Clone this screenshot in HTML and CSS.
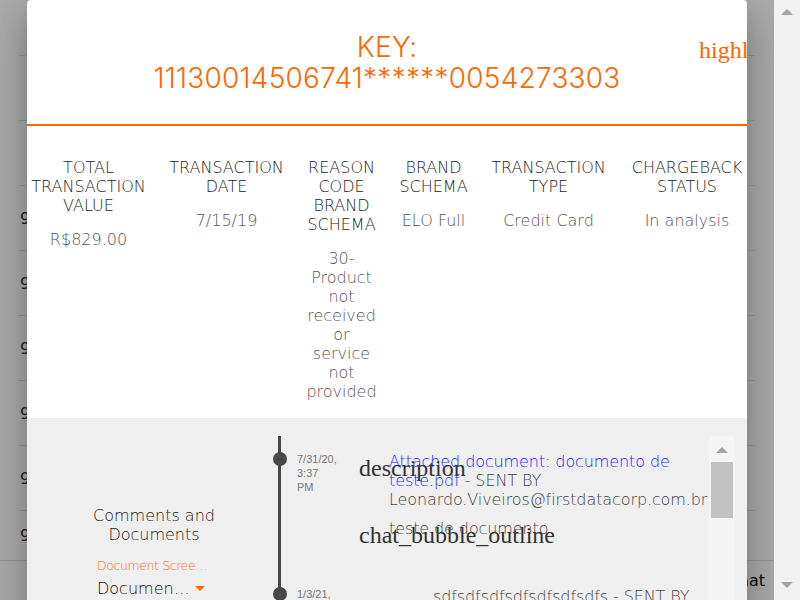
FILE: index.html
```html
<!DOCTYPE html>
<html lang="en">
<head>
<meta charset="utf-8">
<title>Chargeback details</title>
<link rel="stylesheet" href="styles.css">
</head>
<body>
<div class="viewport">
  <div class="page">
    <div class="table">
      <div class="row head"></div>
      <div class="row"></div>
      <div class="row"></div>
      <div class="row"><span class="cell">9112233</span></div>
      <div class="row"><span class="cell">9112234</span></div>
      <div class="row"><span class="cell">9112235</span></div>
      <div class="row"><span class="cell">9112236</span></div>
      <div class="row"><span class="cell">9112237</span></div>
      <div class="row last"><span class="cell">9112238</span></div>
    </div>
    <div class="footer"><span>Format</span></div>
    <div class="backdrop"></div>

    <div class="dialog">
      <div class="dlg-head">
        <h1 class="key">KEY:<br>11130014506741******0054273303</h1>
        <span class="mi close">highlight_off</span>
      </div>

      <div class="details">
        <div class="col">
          <div class="th">Total transaction value</div>
          <div class="td">R$829.00</div>
        </div>
        <div class="col">
          <div class="th">Transaction date</div>
          <div class="td">7/15/19</div>
        </div>
        <div class="col">
          <div class="th">Reason code brand schema</div>
          <div class="td">30-Product not received or service not provided</div>
        </div>
        <div class="col">
          <div class="th">Brand schema</div>
          <div class="td">ELO Full</div>
        </div>
        <div class="col">
          <div class="th">Transaction type</div>
          <div class="td">Credit Card</div>
        </div>
        <div class="col">
          <div class="th">Chargeback status</div>
          <div class="td">In analysis</div>
        </div>
      </div>

      <div class="comments">
        <div class="c-left">
          <div class="c-title">Comments and Documents</div>
          <div class="field">
            <div class="field-label">Document Screening</div>
            <div class="select"><span class="select-value">Document type</span><i class="caret"></i></div>
          </div>
        </div>

        <div class="timeline">
          <div class="entry">
            <span class="dot"></span>
            <div class="date">7/31/20, 3:37 PM</div>
            <div class="items">
              <div class="item">
                <span class="mi">description</span>
                <p class="msg"><a class="doc-link">Attached document: documento de teste.pdf</a> - SENT BY Leonardo.Viveiros@firstdatacorp.com.br</p>
              </div>
              <div class="item">
                <span class="mi">chat_bubble_outline</span>
                <p class="msg">teste de documento</p>
              </div>
            </div>
          </div>
          <div class="entry">
            <span class="dot"></span>
            <div class="date">1/3/21, 3:08 PM</div>
            <div class="items">
              <div class="item">
                <span class="mi"></span>
                <p class="msg indent">sdfsdfsdfsdfsdfsdfsdfs - SENT BY Leonardo.Viveiros@firstdatacorp.com.br</p>
              </div>
            </div>
          </div>
        </div>

        <div class="vscroll"><span class="arrow-up"></span><span class="thumb"></span></div>
      </div>
    </div>
  </div>
  <div class="page-scroll"><span class="arrow-up"></span><span class="arrow-down"></span></div>
</div>
</body>
</html>
```
FILE: styles.css
```css
html, body {
  margin: 0;
  padding: 0;
}
body {
  width: 800px;
  height: 600px;
  overflow: hidden;
  font-family: "DejaVu Sans", sans-serif;
  font-weight: 200;
  background: #fff;
}
.viewport {
  display: flex;
  height: 600px;
}
.page {
  position: relative;
  width: 774px;
  height: 600px;
  overflow: hidden;
  background: #fff;
  flex: none;
}

/* background table */
.table {
  margin-left: 19px;
  width: 736px;
}
.row {
  box-sizing: border-box;
  height: 65px;
  border-bottom: 1px solid #dedede;
  display: flex;
  align-items: center;
  padding-left: 1px;
  font-size: 16px;
  font-weight: 400;
  color: #333;
}
.row.head { height: 56px; }
.row.last { height: 49px; border-bottom: 0; }
.footer {
  box-sizing: border-box;
  border-top: 1px solid #dedede;
  height: 40px;
  display: flex;
  justify-content: flex-end;
  align-items: center;
  padding-right: 9px;
  font-size: 16px;
  font-weight: 400;
  color: #111;
  background: #fff;
}
.backdrop {
  position: absolute;
  inset: 0;
  background: rgba(0, 0, 0, 0.33);
}

/* dialog */
.dialog {
  position: absolute;
  left: 27px;
  top: 0;
  width: 720px;
  height: 660px;
  background: #fff;
  border-radius: 4px;
  overflow: hidden;
  box-shadow: 0 11px 15px -7px rgba(0,0,0,.2), 0 24px 38px 3px rgba(0,0,0,.14), 0 9px 46px 8px rgba(0,0,0,.12);
}
.dlg-head {
  position: relative;
  box-sizing: border-box;
  height: 126px;
  padding-top: 32px;
  border-bottom: 2px solid #ff6600;
  text-align: center;
}
.key {
  margin: 0;
  font-family: "Inter", sans-serif;
  font-weight: 300;
  font-size: 28px;
  line-height: 31px;
  letter-spacing: 0.25px;
  color: #ff6600;
}
.mi {
  font-family: "Liberation Serif", serif;
  font-weight: 400;
  font-size: 24px;
  line-height: 24px;
  white-space: nowrap;
}
.close {
  position: absolute;
  left: 672px;
  top: 38px;
  color: #ff6600;
}

/* details */
.details {
  display: grid;
  grid-template-columns: 117px 116px 71px 70px 117px 117px;
  column-gap: 21.5px;
  padding: 32px 0 17px 3px;
  align-items: start;
}
.col {
  text-align: center;
  font-size: 16px;
  line-height: 19px;
}
.th {
  text-transform: uppercase;
  color: #1c1c1c;
}
.td {
  margin-top: 15px;
  color: #555;
}

/* comments */
.comments {
  display: flex;
  align-items: flex-start;
  background: #efefef;
  padding-top: 18px;
  height: 300px;
}
.c-left {
  flex: none;
  width: 254px;
  padding-top: 70px;
  display: flex;
  flex-direction: column;
  align-items: center;
  text-align: center;
}
.c-title {
  max-width: 140px;
  font-size: 16px;
  line-height: 19px;
  color: #1c1c1c;
}
.field {
  width: 112px;
  margin-top: 14px;
  margin-left: -2px;
  text-align: left;
}
.field-label {
  font-size: 12.5px;
  line-height: 16px;
  letter-spacing: -0.4px;
  color: #ff6a13;
  white-space: nowrap;
  overflow: hidden;
  text-overflow: ellipsis;
}
.select {
  margin-top: 5px;
  display: flex;
  align-items: center;
  font-size: 16px;
  line-height: 19px;
  color: #111;
}
.select-value {
  width: 94px;
  white-space: nowrap;
  overflow: hidden;
  text-overflow: ellipsis;
}
.caret {
  margin-left: 4px;
  width: 0;
  height: 0;
  border-left: 5px solid transparent;
  border-right: 5px solid transparent;
  border-top: 5px solid #ff6600;
}

.timeline {
  position: relative;
  flex: none;
  width: 428px;
  height: 300px;
}
.timeline::before {
  content: "";
  position: absolute;
  left: -3px;
  top: 0;
  bottom: 0;
  width: 3px;
  background: #474747;
}
.entry {
  position: relative;
  display: flex;
  align-items: flex-start;
  padding-left: 16px;
  margin-top: 16px;
  margin-bottom: 40px;
}
.entry + .entry { margin-top: 0; }
.dot {
  position: absolute;
  left: -8px;
  top: 0;
  width: 14px;
  height: 14px;
  border-radius: 50%;
  background: #474747;
}
.date {
  flex: none;
  width: 40px;
  margin-right: 22px;
  font-family: "Liberation Sans", sans-serif;
  font-weight: 400;
  font-size: 11px;
  line-height: 14px;
  color: #777;
}
.items {
  display: flex;
  flex-direction: column;
  gap: 10px;
}
.item {
  display: flex;
  align-items: flex-start;
}
.item .mi {
  flex: none;
  width: 24px;
  margin-top: 4px;
  color: #333;
}
.msg {
  margin: 0 0 0 6px;
  width: 320px;
  font-size: 16px;
  line-height: 19px;
  letter-spacing: -0.1px;
  color: #444;
}
.msg.indent { text-indent: 44px; }
.doc-link {
  color: #1a1aff;
}

.vscroll {
  flex: none;
  width: 26px;
  height: 300px;
  background: #f4f4f4;
  display: flex;
  flex-direction: column;
  align-items: center;
}
.vscroll .arrow-up {
  margin-top: 11px;
  width: 0;
  height: 0;
  border-left: 6px solid transparent;
  border-right: 6px solid transparent;
  border-bottom: 6px solid #a3a3a3;
}
.thumb {
  margin-top: 9px;
  width: 22px;
  height: 56px;
  background: #c1c1c1;
}

/* page scrollbar */
.page-scroll {
  flex: none;
  width: 26px;
  height: 600px;
  background: #f1f1f1;
  display: flex;
  flex-direction: column;
  align-items: center;
  justify-content: space-between;
}
.page-scroll .arrow-up {
  margin-top: 9px;
  width: 0;
  height: 0;
  border-left: 6px solid transparent;
  border-right: 6px solid transparent;
  border-bottom: 6px solid #a3a3a3;
}
.page-scroll .arrow-down {
  margin-bottom: 12px;
  width: 0;
  height: 0;
  border-left: 6px solid transparent;
  border-right: 6px solid transparent;
  border-top: 6px solid #a3a3a3;
}
```
